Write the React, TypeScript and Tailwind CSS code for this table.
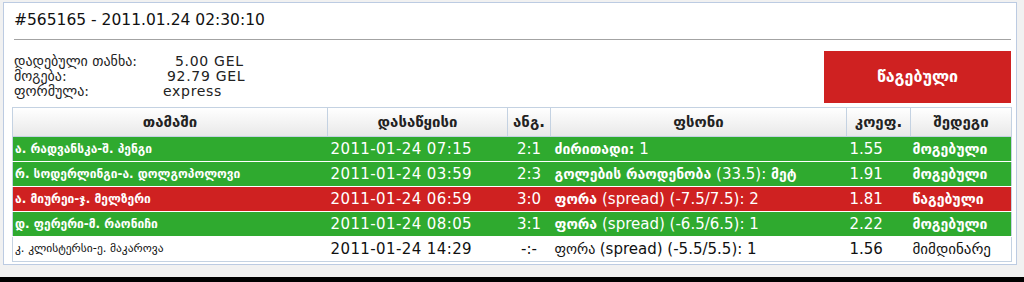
import React from 'react';

type Row = {
  game: string;
  start: string;
  score: string;
  bet: string;
  odds: string;
  result: string;
  tone: 'win' | 'lose' | 'live';
};

const ROWS: Row[] = [
  { game: 'ა. რადვანსკა-შ. პენგი', start: '2011-01-24 07:15', score: '2:1', bet: 'ძირითადი: 1', odds: '1.55', result: 'მოგებული', tone: 'win' },
  { game: 'რ. სოდერლინგი-ა. დოლგოპოლოვი', start: '2011-01-24 03:59', score: '2:3', bet: 'გოლების რაოდენობა (33.5): მეტ', odds: '1.91', result: 'მოგებული', tone: 'win' },
  { game: 'ა. მიურეი-ჯ. მელზერი', start: '2011-01-24 06:59', score: '3:0', bet: 'ფორა (spread) (-7.5/7.5): 2', odds: '1.81', result: 'წაგებული', tone: 'lose' },
  { game: 'დ. ფერერი-მ. რაონიჩი', start: '2011-01-24 08:05', score: '3:1', bet: 'ფორა (spread) (-6.5/6.5): 1', odds: '2.22', result: 'მოგებული', tone: 'win' },
  { game: 'კ. კლისტერსი-ე. მაკაროვა', start: '2011-01-24 14:29', score: '-:-', bet: 'ფორა (spread) (-5.5/5.5): 1', odds: '1.56', result: 'მიმდინარე', tone: 'live' },
];

const TONE: Record<Row['tone'], string> = {
  win: 'bg-[#2faa2f] text-white',
  lose: 'bg-[#cf2121] text-white',
  live: 'bg-white text-[#111]',
};

const HEADERS = ['თამაში', 'დასაწყისი', 'ანგ.', 'ფსონი', 'კოეფ.', 'შედეგი'];
const WIDTHS = ['w-[315px]', 'w-[180px]', 'w-[43px]', 'w-[296px]', 'w-[64px]', 'w-[101px]'];

function Mixed({ text, geo }: { text: string; geo: string }) {
  const parts = text.split(/([\u10A0-\u10FF][\u10A0-\u10FF\s.:\-]*)/).filter(Boolean);
  return (
    <>
      {parts.map((p, i) =>
        /[\u10A0-\u10FF]/.test(p) ? (
          <span key={i} className={geo}>{p}</span>
        ) : (
          <span key={i} className="text-[15px]">{p}</span>
        ),
      )}
    </>
  );
}

export default function App() {
  return (
    <div className="h-[282px] bg-[#f1f1f1] flex flex-col font-['DejaVu_Sans',sans-serif] overflow-hidden">
      <div className="ml-[3px] mt-[2px] w-[1014px] h-[263px] border border-[#bccbe2] bg-white pl-[8px] pr-[5px]">
        {/* შეკვეთის სათაური */}
        <div className="h-[36px] flex items-center pl-[2px] text-[15.5px] text-[#111]">
          #565165 - 2011.01.24 02:30:10
        </div>
        <div className="ml-[2px] border-t border-[#a3a3a3]" />

        <div className="h-[67px] flex justify-between">
          <div className="pt-[14px] pl-[2px] flex text-[#222]">
            <div className="w-[149px] flex flex-col text-[14px]">
              <span className="h-[15px] leading-[15px]">დადებული თანხა:</span>
              <span className="h-[15px] leading-[15px]">მოგება:</span>
              <span className="h-[15px] leading-[15px]">ფორმულა:</span>
            </div>
            <div className="flex flex-col text-[14px] tracking-[0.7px]">
              <span className="h-[15px] leading-[15px] pl-[12px]">5.00 GEL</span>
              <span className="h-[15px] leading-[15px] pl-[4px]">92.79 GEL</span>
              <span className="h-[15px] leading-[15px]">express</span>
            </div>
          </div>
          <div className="mt-[11px] w-[187px] h-[52px] bg-[#cf2121] flex items-center justify-center text-white text-[16px] font-bold">
            წაგებული
          </div>
        </div>

        <table className="w-[999px] border-collapse table-fixed border border-[#c4d2e2]">
          <thead>
            <tr className="h-[29px] bg-gradient-to-b from-white to-[#e8e8e8]">
              {HEADERS.map((h, i) => (
                <th key={h} className={`${WIDTHS[i]} border border-[#c4d2e2] text-[15px] font-bold text-[#222] text-center`}>
                  {h}
                </th>
              ))}
            </tr>
          </thead>
          <tbody>
            {ROWS.map((r) => {
              const live = r.tone === 'live';
              const geo = live ? 'text-[14px]' : 'text-[14px] font-bold';
              return (
                <tr key={r.game} className={`h-[24px] border-b border-white last:border-[#c4d2e2] ${TONE[r.tone]}`}>
                  <td className={`pl-[2px] whitespace-nowrap ${live ? 'text-[11.5px]' : 'text-[12px] font-bold'}`}>{r.game}</td>
                  <td className="pl-[3px] text-[15px] tracking-[0.4px]">{r.start}</td>
                  <td className="text-center text-[15px]">{r.score}</td>
                  <td className="pl-[4px] whitespace-nowrap">
                    <Mixed text={r.bet} geo={geo} />
                  </td>
                  <td className="pl-[3px] text-[15px]">{r.odds}</td>
                  <td className={`pl-[2px] ${live ? 'text-[15px]' : 'text-[14px] font-bold'}`}>{r.result}</td>
                </tr>
              );
            })}
          </tbody>
        </table>
      </div>
      <div className="flex-1" />
      <div className="h-[5px] bg-black" />
    </div>
  );
}
